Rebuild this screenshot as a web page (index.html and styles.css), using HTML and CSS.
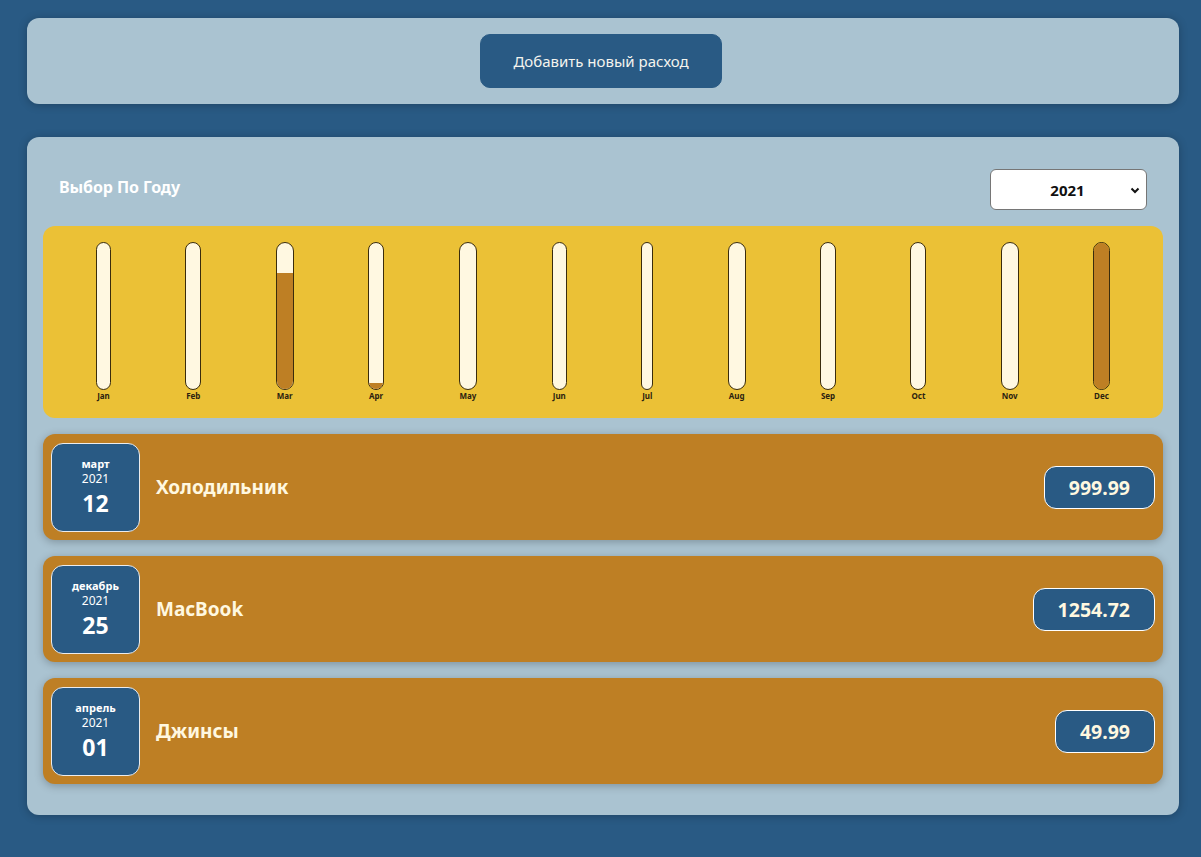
FILE: index.html
```html
<!DOCTYPE html>
<html lang="ru">
<head>
<meta charset="utf-8">
<title>Расходы</title>
<link rel="stylesheet" href="styles.css">
</head>
<body>
<div class="new-expense">
  <button class="btn-add" type="button">Добавить новый расход</button>
</div>

<div class="expenses">
  <div class="filter">
    <div class="filter__control">
      <label>Выбор По Году</label>
      <div class="select">2021<svg class="select__arrow" width="10" height="7" viewBox="0 0 10 7"><path d="M1.5 1.5 L5 5 L8.5 1.5" fill="none" stroke="#111" stroke-width="2"/></svg></div>
    </div>
  </div>

  <div class="chart">
    <div class="bar"><div class="bar__inner"><div class="bar__fill" style="height:0%"></div></div><div class="bar__label">Jan</div></div>
    <div class="bar"><div class="bar__inner"><div class="bar__fill" style="height:0%"></div></div><div class="bar__label">Feb</div></div>
    <div class="bar"><div class="bar__inner"><div class="bar__fill" style="height:79.7%"></div></div><div class="bar__label">Mar</div></div>
    <div class="bar"><div class="bar__inner"><div class="bar__fill" style="height:4%"></div></div><div class="bar__label">Apr</div></div>
    <div class="bar"><div class="bar__inner"><div class="bar__fill" style="height:0%"></div></div><div class="bar__label">May</div></div>
    <div class="bar"><div class="bar__inner"><div class="bar__fill" style="height:0%"></div></div><div class="bar__label">Jun</div></div>
    <div class="bar"><div class="bar__inner"><div class="bar__fill" style="height:0%"></div></div><div class="bar__label">Jul</div></div>
    <div class="bar"><div class="bar__inner"><div class="bar__fill" style="height:0%"></div></div><div class="bar__label">Aug</div></div>
    <div class="bar"><div class="bar__inner"><div class="bar__fill" style="height:0%"></div></div><div class="bar__label">Sep</div></div>
    <div class="bar"><div class="bar__inner"><div class="bar__fill" style="height:0%"></div></div><div class="bar__label">Oct</div></div>
    <div class="bar"><div class="bar__inner"><div class="bar__fill" style="height:0%"></div></div><div class="bar__label">Nov</div></div>
    <div class="bar"><div class="bar__inner"><div class="bar__fill" style="height:100%"></div></div><div class="bar__label">Dec</div></div>
  </div>

  <ul class="list">
    <li class="item">
      <div class="date"><div class="date__month">март</div><div class="date__year">2021</div><div class="date__day">12</div></div>
      <div class="item__desc"><h2>Холодильник</h2><div class="item__price">999.99</div></div>
    </li>
    <li class="item">
      <div class="date"><div class="date__month">декабрь</div><div class="date__year">2021</div><div class="date__day">25</div></div>
      <div class="item__desc"><h2>MacBook</h2><div class="item__price">1254.72</div></div>
    </li>
    <li class="item">
      <div class="date"><div class="date__month">апрель</div><div class="date__year">2021</div><div class="date__day">01</div></div>
      <div class="item__desc"><h2>Джинсы</h2><div class="item__price">49.99</div></div>
    </li>
  </ul>
</div>
</body>
</html>
```

FILE: styles.css
```css
* { box-sizing: border-box; }

html, body { height: 100%; }

body {
  margin: 0;
  padding: 18px 22px 0 27px;
  background: #295a84;
  font-family: "Noto Sans", "Open Sans", sans-serif;
  font-size: 15px;
}

.new-expense {
  background: #aac3d1;
  padding: 16px;
  border-radius: 12px;
  text-align: center;
  box-shadow: 0 1px 8px rgba(0, 0, 0, 0.25);
}

.btn-add {
  font: inherit;
  font-size: 15px;
  width: 242px;
  height: 54px;
  padding: 0;
  margin-right: 4px;
  border: 1px solid #295a84;
  background: #295a84;
  color: #f4f4ee;
  border-radius: 10px;
  cursor: pointer;
}

.expenses {
  margin-top: 33px;
  padding: 16px;
  background: #aac3d1;
  border-radius: 12px;
  box-shadow: 0 1px 8px rgba(0, 0, 0, 0.25);
}

.filter { color: #fff; padding: 0 16px; }

.filter__control {
  display: flex;
  align-items: center;
  justify-content: space-between;
  margin: 16px 0;
}

.filter__control label {
  font-weight: bold;
  font-size: 16px;
  margin-bottom: 6px;
  letter-spacing: -0.1px;
}

.select {
  position: relative;
  width: 157px;
  height: 41px;
  background: #fff;
  border: 1px solid #767676;
  border-radius: 6px;
  color: #111;
  font-weight: bold;
  font-size: 15px;
  display: flex;
  align-items: center;
  justify-content: center;
  padding-right: 2px;
}

.select__arrow {
  position: absolute;
  right: 6px;
  top: 17px;
}

.chart {
  height: 192px;
  padding: 16px;
  border-radius: 12px;
  background: #ebc136;
  display: flex;
  justify-content: space-around;
}

.bar {
  height: 100%;
  display: flex;
  flex-direction: column;
  align-items: center;
}

.bar__inner {
  flex: 1;
  width: 100%;
  border: 1px solid #3a2c0c;
  border-radius: 12px;
  background: #fff8e1;
  overflow: hidden;
  display: flex;
  flex-direction: column;
  justify-content: flex-end;
}

.bar__fill {
  width: 100%;
  background: #be7f24;
}

.bar__label {
  font-weight: bold;
  font-size: 8px;
  line-height: 12px;
  color: #2b2210;
  padding: 0 1px;
}

.list {
  list-style: none;
  margin: 0;
  padding: 0;
}

.item {
  display: flex;
  align-items: center;
  min-height: 106px;
  padding: 8px;
  margin: 16px 0;
  border-radius: 12px;
  background: #be7f24;
  box-shadow: 0 2px 8px rgba(0, 0, 0, 0.25);
}

.item:last-child { margin-bottom: 15px; }

.date {
  width: 89px;
  height: 89px;
  flex: none;
  border: 1px solid #ececec;
  border-radius: 12px;
  background: #295a84;
  color: #fff;
  display: flex;
  flex-direction: column;
  align-items: center;
  justify-content: center;
}

.date__month { font-size: 11px; font-weight: bold; line-height: 15px; }
.date__year { font-size: 12px; line-height: 16px; }
.date__day { font-size: 23px; font-weight: bold; line-height: 32px; }

.item__desc {
  flex: 1;
  display: flex;
  align-items: center;
}

.item__desc h2 {
  flex: 1;
  margin: 0 16px;
  font-size: 19px;
  color: #fff8e0;
}

.item__price {
  font-size: 19.5px;
  font-weight: bold;
  color: #fff8e0;
  background: #295a84;
  border: 1px solid #fff;
  padding: 8px 24px;
  border-radius: 12px;
  line-height: 25px;
}
```
